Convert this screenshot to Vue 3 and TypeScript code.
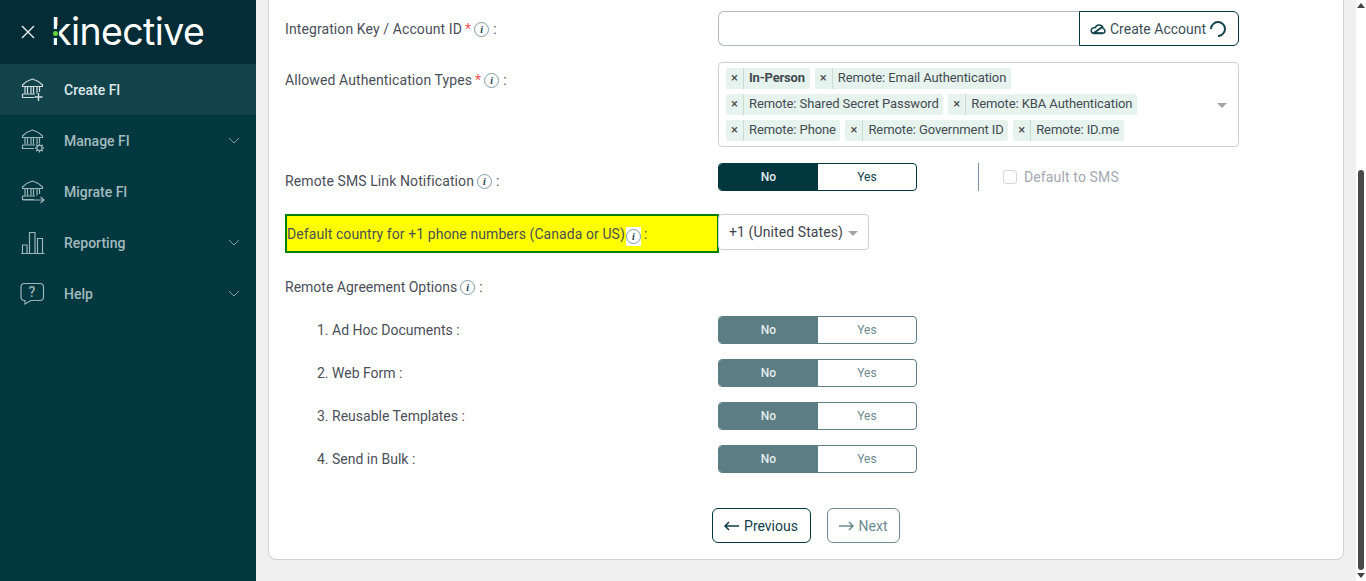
<template>
  <div class="page">
    <aside class="sidebar">
      <div class="brand">
        <svg class="close-x" width="16" height="16" viewBox="0 0 16 16"><path d="M2 2 L14 14 M14 2 L2 14" stroke="#e8eeee" stroke-width="1.4" fill="none" /></svg>
        <div class="logo">
          <span class="logo-text">kinective</span>
          <span class="logo-gap"></span>
          <span class="logo-break"></span>
          <span class="logo-dot"></span>
        </div>
      </div>
      <nav>
        <a v-for="item in navItems" :key="item.label" class="nav-item" :class="{ active: item.active }">
          <svg class="nav-icon" width="26" height="26" viewBox="0 0 26 26" fill="none" stroke="currentColor" stroke-width="1.2">
            <template v-if="item.icon !== 'chart' && item.icon !== 'help'">
              <path d="M2.500 8 Q7 3.500 12.500 2 Q18 3.500 22.500 8 V9.500 H2.500 Z" />
              <path d="M5 10 V16.500 M7.500 10 V16.500 M11 10 V16.500 M13.500 10 V16.500 M17 10 V16.500 M19.500 10 V15" />
              <path d="M2.500 17 H15 M2.500 17 V20.500 H14" />
            </template>
            <path v-if="item.icon === 'plus'" d="M18.500 16 V24 M14.500 20 H22.500" stroke-width="1.4" />
            <g v-if="item.icon === 'gear'">
              <circle cx="19.500" cy="20" r="2.600" />
              <path d="M19.500 15.500 V17 M19.500 23 V24.500 M15 20 H16.500 M22.500 20 H24 M16.300 16.800 L17.500 18 M21.500 22 L22.700 23.200 M22.700 16.800 L21.500 18 M17.500 22 L16.300 23.200" stroke-width="1.400" />
            </g>
            <path v-if="item.icon === 'arrow'" d="M3 21 H24 M20.500 18 L24 21 L20.500 24" />
            <path v-if="item.icon === 'chart'" d="M1 23.500 H24.500 M2.500 23.500 V15 H7 V23.500 M9.500 23.500 V2.500 H15 V23.500 M17.500 23.500 V8.500 H22.500 V23.500" />
            <path v-if="item.icon === 'help'" d="M4.500 2.500 H20 Q23.500 2.500 23.500 6 V16 Q23.500 19.500 20 19.500 H11 L5 23 V19.500 H4.500 Q1 19.500 1 16 V6 Q1 2.500 4.500 2.500 Z" />
            <text v-if="item.icon === 'help'" x="12" y="16" class="help-mark">?</text>
          </svg>
          <span class="nav-label">{{ item.label }}</span>
          <svg v-if="item.caret" class="nav-caret" width="12" height="7" viewBox="0 0 12 7" fill="none"><path d="M1 1 L6 6 L11 1" stroke="currentColor" stroke-width="1" /></svg>
        </a>
      </nav>
    </aside>

    <main class="content">
      <section class="card">
        <div class="row row-key">
          <div class="label">
            Integration Key / Account ID<span class="req">*</span><span class="info">i</span><span class="colon">:</span>
          </div>
          <div class="key-group">
            <div class="key-input"></div>
            <button class="create-btn">
              <svg width="16" height="12" viewBox="0 0 16 12" fill="none" stroke="#12424a" stroke-width="1.5"><path d="M4 10.300 H12.500 Q15 10.300 15 8 Q15 6 13 5.500 Q12.500 2 9 2 Q6 2 5.500 4.500 Q1.500 4.500 1.200 7.500 Q1.200 10.300 4 10.300 Z" /><path d="M4.500 9.500 L13 3.500 M3 10.300 H13" stroke-width="2" /></svg>
              <span>Create Account</span>
              <span class="spinner"></span>
            </button>
          </div>
        </div>

        <div class="row row-auth">
          <div class="label">
            Allowed Authentication Types<span class="req">*</span><span class="info">i</span><span class="colon">:</span>
          </div>
          <div class="tag-box">
            <div class="tags">
              <span v-for="tag in authTypes" :key="tag" class="tag">
                <span class="tag-x">×</span>
                <span class="tag-text" :class="{ strong: tag === 'In-Person' }">{{ tag }}</span>
              </span>
            </div>
            <span class="caret tag-caret"></span>
          </div>
        </div>

        <div class="row row-sms">
          <div class="label">
            Remote SMS Link Notification<span class="info">i</span><span class="colon">:</span>
          </div>
          <div class="toggle">
            <span class="toggle-on">No</span>
            <span class="toggle-off">Yes</span>
          </div>
          <div class="sms-divider"></div>
          <label class="sms-check"><span class="check-box"></span>Default to SMS</label>
        </div>

        <div class="row row-country">
          <div class="label highlight">
            Default country for +1 phone numbers (Canada or US)<span class="info-white"><span class="info">i</span></span><span class="colon">:</span>
          </div>
          <div class="country-select">
            +1 (United States)<span class="caret country-caret"></span>
          </div>
        </div>

        <div class="options-title">
          Remote Agreement Options<span class="info">i</span><span class="colon">:</span>
        </div>

        <div v-for="opt in agreementOptions" :key="opt" class="row row-option">
          <div class="label option-label">{{ opt }} :</div>
          <div class="toggle disabled">
            <span class="toggle-on">No</span>
            <span class="toggle-off">Yes</span>
          </div>
        </div>

        <div class="actions">
          <button class="btn-prev">
            <svg width="15" height="10" viewBox="0 0 15 10" fill="none" stroke="currentColor" stroke-width="1.500"><path d="M15 5 H1 M5 1 L1 5 L5 9" /></svg>
            Previous
          </button>
          <button class="btn-next">
            <svg width="15" height="10" viewBox="0 0 15 10" fill="none" stroke="currentColor" stroke-width="1.500"><path d="M0 5 H14 M10 1 L14 5 L10 9" /></svg>
            Next
          </button>
        </div>
      </section>
    </main>

    <div class="scrollbar">
      <span class="sb-arrow up"></span>
      <div class="sb-track"><div class="sb-thumb"></div></div>
      <span class="sb-arrow down"></span>
    </div>
  </div>
</template>

<script setup lang="ts">
interface NavItem {
  label: string
  icon: string
  caret: boolean
  active?: boolean
}

const navItems: NavItem[] = [
  { label: 'Create FI', icon: 'plus', caret: false, active: true },
  { label: 'Manage FI', icon: 'gear', caret: true },
  { label: 'Migrate FI', icon: 'arrow', caret: false },
  { label: 'Reporting', icon: 'chart', caret: true },
  { label: 'Help', icon: 'help', caret: true }
]

const authTypes = [
  'In-Person',
  'Remote: Email Authentication',
  'Remote: Shared Secret Password',
  'Remote: KBA Authentication',
  'Remote: Phone',
  'Remote: Government ID',
  'Remote: ID.me'
]

const agreementOptions = ['1. Ad Hoc Documents', '2. Web Form', '3. Reusable Templates', '4. Send in Bulk']
</script>

<style>
html,
body {
  margin: 0;
  overflow: hidden;
}
</style>

<style scoped>
.page {
  display: flex;
  width: 1366px;
  height: 581px;
  overflow: hidden;
  background: #f0f0f0;
  font-family: Roboto, "Liberation Sans", sans-serif;
  font-size: 14px;
  color: #4a4f57;
}
.sidebar {
  width: 256px;
  flex: none;
  background: #01373f;
}
.brand {
  height: 64px;
  background: #032c36;
  display: flex;
  align-items: center;
  padding-left: 20px;
  box-sizing: border-box;
}
.close-x {
  flex: none;
}
.logo {
  position: relative;
  margin-left: 15px;
  height: 48px;
  width: 156px;
  overflow: hidden;
}
.logo-text {
  font-family: Inter, sans-serif;
  font-weight: 400;
  font-size: 37.500px;
  line-height: 48px;
  letter-spacing: -0.6px;
  color: #fff;
  white-space: nowrap;
}
.logo-gap {
  position: absolute;
  left: 6px;
  top: 18px;
  width: 2px;
  height: 24px;
  background: #032c36;
}
.logo-break {
  position: absolute;
  left: 1px;
  top: 21px;
  width: 7px;
  height: 9px;
  background: #032c36;
}
.logo-dot {
  position: absolute;
  left: 2px;
  top: 23px;
  width: 5px;
  height: 5px;
  border-radius: 50%;
  background: #63d13e;
}
.nav-item {
  height: 51px;
  display: flex;
  align-items: center;
  padding: 0 16px 0 20px;
  color: #a3bbbe;
  font-weight: 500;
}
.nav-item.active {
  background: #12424a;
  color: #dbe9ea;
}
.nav-icon {
  flex: none;
  color: #9db5b8;
}
.active .nav-icon {
  color: #d0dcdd;
}
.help-mark {
  font-size: 14px;
  text-anchor: middle;
  fill: currentColor;
  stroke: none;
  font-family: Roboto, sans-serif;
  font-weight: 500;
}
.nav-label {
  margin-left: 18px;
  flex: 1;
}
.nav-caret {
  color: #7f9da1;
}
.content {
  flex: 1;
  padding: 0 12px 21px 12px;
  min-width: 0;
  height: 581px;
  box-sizing: border-box;
}
.card {
  height: 100%;
  box-sizing: border-box;
  background: #fff;
  border: 1px solid #d2d2d2;
  border-top: none;
  border-radius: 0 0 8px 8px;
  padding: 11px 0 0 16px;
}
.row {
  display: flex;
  align-items: flex-start;
}
.label {
  width: 433px;
  flex: none;
  line-height: 20px;
  letter-spacing: 0.1px;
}
.req {
  color: #ee5a5a;
  margin-left: 3px;
}
.info {
  display: inline-flex;
  align-items: center;
  justify-content: center;
  width: 15px;
  height: 15px;
  margin-left: 3px;
  box-sizing: border-box;
  border: 1px solid #7e9ca5;
  border-radius: 50%;
  font: italic 700 10px "Liberation Serif", serif;
  color: #16424c;
  vertical-align: 1px;
}
.colon {
  margin-left: 4px;
}
.row-key {
  height: 35px;
}
.row-key .label {
  padding-top: 8px;
}
.key-group {
  display: flex;
  width: 521px;
  height: 35px;
}
.key-input {
  flex: 1;
  border: 1px solid #b4b9c2;
  border-right: none;
  border-radius: 6px 0 0 6px;
}
.create-btn {
  width: 160px;
  flex: none;
  display: flex;
  align-items: center;
  gap: 4px;
  padding: 0 0 0 10px;
  box-sizing: border-box;
  border: 1px solid #01373f;
  border-radius: 0 6px 6px 0;
  background: #fff;
  font: inherit;
  color: #3d4f55;
}
.spinner {
  width: 16px;
  height: 16px;
  box-sizing: border-box;
  border: 2px solid #12424a;
  border-left-color: transparent;
  border-radius: 50%;
  transform: rotate(-45deg);
}
.row-auth {
  margin-top: 16px;
  height: 85px;
}
.row-auth .label {
  padding-top: 8px;
}
.tag-box {
  position: relative;
  width: 521px;
  height: 85px;
  box-sizing: border-box;
  border: 1px solid #cfd1d4;
  border-radius: 4px;
  padding: 5px 7px;
}
.tags {
  display: flex;
  flex-wrap: wrap;
  gap: 5px 5px;
  width: 440px;
}
.tag {
  display: inline-flex;
  align-items: center;
  height: 21px;
  background: #e6f3ee;
  border-radius: 2px;
  font-size: 13px;
  letter-spacing: -0.09px;
  color: #444b52;
  white-space: nowrap;
}
.tag-x {
  width: 17px;
  height: 21px;
  line-height: 20px;
  text-align: center;
  color: #444;
  border-right: 1px solid #c9dcd3;
  font-size: 13px;
}
.tag-text {
  padding: 0 4.500px 2px 5px;
}
.tag-text.strong {
  font-weight: 700;
  letter-spacing: -0.2px;
  padding-right: 5px;
}
.caret {
  display: inline-block;
  width: 0;
  height: 0;
  border-left: 5px solid transparent;
  border-right: 5px solid transparent;
  border-top: 5px solid #a5a5a5;
}
.tag-caret {
  position: absolute;
  right: 11px;
  top: 40px;
}
.row-sms {
  margin-top: 16px;
  height: 28px;
}
.row-sms .label {
  padding-top: 8px;
}
.toggle {
  width: 199px;
  height: 28px;
  flex: none;
  display: flex;
  box-sizing: border-box;
  border: 1px solid #01373f;
  border-radius: 4px;
  font-size: 12px;
  font-weight: 500;
  overflow: hidden;
}
.toggle-on {
  width: 99px;
  flex: none;
  background: #01373f;
  color: #e3ecec;
  text-align: center;
  line-height: 26px;
}
.toggle-off {
  flex: 1;
  text-align: center;
  line-height: 26px;
  color: #0d3c46;
  font-weight: 400;
}
.toggle.disabled {
  border-color: #5c7d83;
}
.toggle.disabled .toggle-on {
  background: #5c7d83;
}
.toggle.disabled .toggle-off {
  color: #6c8a8f;
}
.sms-divider {
  width: 1px;
  height: 28px;
  background: #7d92a0;
  margin-left: 61px;
}
.sms-check {
  display: flex;
  align-items: center;
  margin-left: 24px;
  height: 28px;
  color: #a4a8af;
  letter-spacing: 0.13px;
}
.check-box {
  width: 14px;
  height: 14px;
  box-sizing: border-box;
  border: 1px solid #d6d8da;
  border-radius: 3px;
  margin-right: 7px;
}
.row-country {
  margin-top: 23px;
  height: 38px;
}
.highlight {
  width: 434px;
  height: 39px;
  box-sizing: border-box;
  margin-right: -1px;
  background: #ffff00;
  border: 2px solid #008000;
  padding-left: 0;
  line-height: 37px;
  letter-spacing: 0.08px;
}
.info-white {
  display: inline-flex;
  align-items: center;
  height: 19px;
  margin-left: 1px;
  background: #fff;
  vertical-align: -1px;
}
.info-white .info {
  margin-left: 0;
  vertical-align: 0;
}
.highlight .colon {
  margin-left: 3px;
}
.country-select {
  width: 151px;
  height: 36px;
  box-sizing: border-box;
  border: 1px solid #cfd1d4;
  border-radius: 4px;
  padding-left: 10px;
  line-height: 35px;
  color: #3d444c;
  letter-spacing: 0.1px;
}
.country-caret {
  margin-left: 5px;
  vertical-align: 1px;
}
.options-title {
  margin-top: 25px;
  line-height: 20px;
  height: 20px;
}
.row-option {
  height: 28px;
  margin-top: 15px;
}
.options-title + .row-option {
  margin-top: 19px;
}
.option-label {
  padding-left: 32px;
  box-sizing: border-box;
  line-height: 28px;
  letter-spacing: 0;
}
.actions {
  display: flex;
  justify-content: center;
  gap: 16px;
  margin-top: 35px;
  padding-right: 17px;
}
.actions button {
  height: 35px;
  background: #fff;
  font: inherit;
  border-radius: 6px;
  padding: 0;
  display: flex;
  align-items: center;
  justify-content: center;
  gap: 5px;
}
.btn-prev {
  width: 99px;
  border: 1px solid #01373f;
  color: #0f3d47;
}
.btn-next {
  width: 73px;
  border: 1px solid #6c8a8f;
  color: #6c8a8f;
}
.scrollbar {
  width: 10px;
  flex: none;
  background: #fff;
  display: flex;
  flex-direction: column;
  align-items: center;
  padding: 3px 0;
  box-sizing: border-box;
}
.sb-arrow {
  width: 0;
  height: 0;
  border-left: 4px solid transparent;
  border-right: 4px solid transparent;
}
.sb-arrow.up {
  border-bottom: 5px solid #444;
}
.sb-arrow.down {
  border-top: 5px solid #444;
}
.sb-track {
  flex: 1;
  width: 6px;
  display: flex;
  flex-direction: column;
  justify-content: flex-end;
  padding-bottom: 3px;
}
.sb-thumb {
  height: 400px;
  background: #484848;
  border-radius: 3px;
}
</style>
